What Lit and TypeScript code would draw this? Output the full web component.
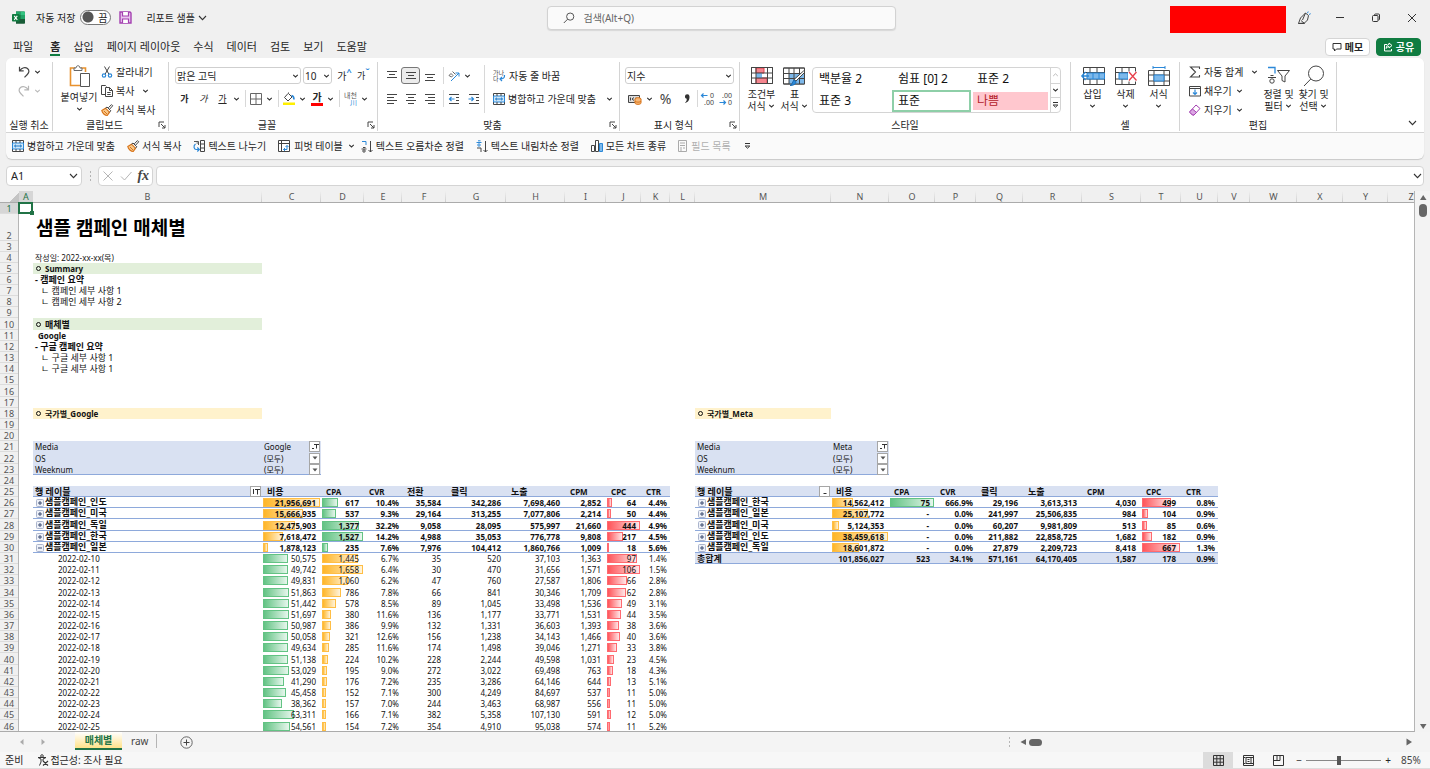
import { LitElement, html, svg, css, nothing, type TemplateResult, type SVGTemplateResult } from "lit";
import { customElement, state } from "lit/decorators.js";
import { classMap } from "lit/directives/class-map.js";

/* ---------- icons ---------- */

const icon = (w: number, h: number, body: SVGTemplateResult) =>
  html`<svg class="ic" width=${w} height=${h} viewBox="0 0 ${w} ${h}" fill="none" stroke="#444" stroke-width="1" aria-hidden="true">${body}</svg>`;

const chev = (color = "#333") => icon(9, 6, svg`<path d="M2.2 1.8 4.5 4 6.8 1.8" stroke=${color} stroke-width="1.1"/>`);
const chevBig = () => icon(9, 6, svg`<path d="M1 1 4.5 4.6 8 1" stroke="#333" stroke-width="1.1"/>`);

const lines = (rows: [number, number, number][]) =>
  icon(12, 12, svg`${rows.map(([x, y, w]) => svg`<path d="M${x} ${y}.5h${w}"/>`)}`);

const I = {
  logo: () => icon(13, 13, svg`<g stroke="none"><path d="M4 .5h8a1 1 0 0 1 1 1V12a.8.8 0 0 1-.8.8H4z" fill="#185c37"/><path d="M4 .5h4.5v3.5H4z" fill="#21a366"/><path d="M8.5.5H12a1 1 0 0 1 1 1V4H8.5z" fill="#33c481"/><path d="M4 4h4.5v4H4z" fill="#107c41"/><path d="M8.5 4H13v4H8.5z" fill="#21a366"/><rect y="3" width="7.5" height="7.5" rx=".8" fill="#107c41"/></g><path d="M2.2 4.8 5.3 8.8M5.3 4.8 2.2 8.8" stroke="#fff" stroke-width="1.1"/>`),
  save: () => icon(13, 13, svg`<path d="M1 1h10l1 1v10H1z" stroke="#a33fb0" stroke-width="1.4" fill="#e9c5ef"/><path d="M3.5 1v4h6V1M3.5 12V8h6v4" stroke="#a33fb0" stroke-width="1.2" fill="#fff"/>`),
  search: () => icon(12, 12, svg`<circle cx="7.2" cy="4.6" r="3.6" stroke="#555"/><path d="M4.6 7.2.8 11" stroke="#555"/>`),
  pen: () => icon(14, 14, svg`<path d="M1.5 12.5 3.5 7 8.5 2l3 2.5-1 4.5-3 3zM1.5 12.5h6M4 9.5l3.5 3M8.5 2 5.5 9"/><path d="M10.5 2.2 11.2.5M12 3.5l1.7-.8" stroke="#2b88d8"/>`),
  min: () => icon(10, 10, svg`<path d="M1 4.500h8" stroke="#333"/>`),
  restore: () => icon(10, 10, svg`<rect x="1.5" y="2.5" width="5.5" height="6" rx="1" stroke="#333"/><path d="M3.5 2.5V2a1 1 0 0 1 1-1h3a1 1 0 0 1 1 1v4a1 1 0 0 1-1 1" stroke="#333"/>`),
  close: () => icon(10, 10, svg`<path d="M1 1l8 8M9 1 1 9" stroke="#333"/>`),
  memo: () => icon(10, 10, svg`<path d="M1 1.5h8v5.5H4.5L2.5 9V7H1z" stroke="#333"/>`),
  share: () => icon(10, 10, svg`<path d="M4 2.5H1.5v6.500h7V7M6 1l3 2.5-3 2.5V4.5C4.5 4.5 3.5 5.5 3.2 6.5 3.2 4 4.5 2.5 6 2.5z" stroke="#fff"/>`),
  undo: () => icon(12, 12, svg`<path d="M1.5.8v4h4.2M1.8 4.5C4 1.5 7.5.8 9.5 2.5s1.8 4-.2 6L6.5 11.3" stroke="#444" stroke-width="1.2"/>`),
  redo: () => icon(12, 12, svg`<path d="M10.5.8v4H6.3M10.2 4.5C8 1.5 4.5.8 2.5 2.5s-1.800 4 .2 6l2.8 2.8" stroke="#b5b5b5" stroke-width="1.2"/>`),
  paste: () => icon(22, 22, svg`<path d="M6 3H1.5v17.5H11M12 3h4.5v4" stroke="#e8912d" stroke-width="1.6"/><path d="M5 5.5V3h2c0-3 4-3 4 0h2v2.5z" fill="#fff" stroke="#666"/><path d="M11.5 8.5h9v13h-9z" fill="#fff" stroke="#555"/>`),
  cut: () => icon(12, 12, svg`<path d="M3.5.5 7.8 8M8.5.5 4.2 8"/><circle cx="3" cy="9.5" r="1.7" stroke="#2b88d8" stroke-width="1.2"/><circle cx="9" cy="9.5" r="1.7" stroke="#2b88d8" stroke-width="1.2"/>`),
  copy: () => icon(12, 12, svg`<path d="M4 9.5H.5v-9h4l1 1"/><path d="M4.5 2.5h4l3 3v6h-7z" fill="#fff"/><path d="M8.5 2.5v3h3M6.2 7.5h3.5M6.2 9.5h3.5"/>`),
  brush: () => icon(12, 12, svg`<path d="M.8 6.500 4.500 4.200l4 4L6.200 11.500C4 11.500 1.200 9 .8 6.500z" fill="#f9c98a" stroke="#d8741a" stroke-width="1.2"/><path d="M4.500 4.200 6 3l3.800 3.800-1.300 1.400M7.300 3.800 10.500.6l1.200 1.200-3 3.300" stroke="#444"/><path d="M3 7l3 3" stroke="#d8741a"/>`),
  border: () => icon(12, 12, svg`<path d="M.5.5h11v11H.5zM6 .5v11M.5 6h11" stroke="#666"/>`),
  fill: () => icon(12, 14, svg`<path d="M5 1.5 1.5 5.5 5 9 9 5 5.5 1.5V.5"/><path d="M8.5 3.5c2 .5 2.5 2 2.5 4" stroke="#2b88d8" stroke-width="1.6"/><path d="M0 10.5h12v2.5H0z" fill="#ffef00" stroke="none"/>`),
  top: () => lines([[1, 1, 10], [3, 4, 6], [1, 7, 10]]),
  mid: () => lines([[1, 2, 10], [3, 5, 6], [1, 8, 10]]),
  bot: () => lines([[1, 4, 10], [3, 7, 6], [1, 10, 10]]),
  left: () => lines([[1, 1, 10], [1, 4, 7], [1, 7, 10], [1, 10, 7]]),
  center: () => lines([[1, 1, 10], [3, 4, 6], [1, 7, 10], [3, 10, 6]]),
  right: () => lines([[1, 1, 10], [4, 4, 7], [1, 7, 10], [4, 10, 7]]),
  orient: () => icon(12, 12, svg`<path d="M3 11 11 3M7.5 3H11v3.5" stroke="#2b88d8"/><path d="M1 5.5l2-2 2 2-1.5 1.5zM4.500 1.5l3 3" stroke="#666"/>`),
  outdent: () => icon(12, 12, svg`<path d="M1 1.5h10M8 4.5h3M8 7.5h3M1 10.5h10"/><path d="M6.5 6h-5M3.5 4 1.500 6l2 2" stroke="#2b88d8" stroke-width="1.2"/>`),
  indent: () => icon(12, 12, svg`<path d="M1 1.5h10M8 4.5h3M8 7.5h3M1 10.5h10"/><path d="M.5 6h5M3.5 4l2 2-2 2" stroke="#2b88d8" stroke-width="1.2"/>`),
  wrap: () => icon(13, 13, svg`<g stroke="none" fill="#444" font-size="6"><text x="0" y="5.5">가나</text><text x="0" y="12">다</text></g><path d="M11.5 6c.5 3-1.5 4-4.5 4M9 8 7 10l2 2" stroke="#2b88d8" stroke-width="1.2"/>`),
  merge: () => icon(12, 12, svg`<path d="M.5.5h11v11H.5z" fill="#fff"/><path d="M.5 3h11v6H.5z" fill="#cfe6f8" stroke="#2b88d8"/><path d="M4 .5V3M8 .5V3M4 9v2.5M8 9v2.5"/><path d="M2.5 6h7M4 4.7 2.5 6 4 7.3M8 4.700 9.5 6 8 7.3" stroke="#1f7bc9"/>`),
  money: () => icon(14, 12, svg`<path d="M.5 2.5h11v7H.5z" fill="#ddd"/><path d="M2.5 4.5v3M6 4.5 4 6l2 1.5M8 4.5v3"/><g stroke="#d8741a" fill="#f7b878"><ellipse cx="10" cy="6" rx="3" ry="1.3"/><path d="M7 6v4c0 1.800 6 1.8 6 0V6M7 8c0 1.5 6 1.5 6 0"/></g>`),
  comma: () => icon(8, 12, svg`<path d="M6.5 3.5a2.3 2.3 0 1 0-2.8 2.3C4 7.5 3.2 9 1.8 10 4.8 9.5 6.7 7 6.5 3.5z" fill="#333" stroke="none"/>`),
  decUp: () => icon(14, 14, svg`<path d="M6.5 3.5h-6M2.5 1.5l-2 2 2 2" stroke="#2b88d8" stroke-width="1.2"/><g stroke="none" fill="#444" font-size="7"><text x="9" y="6">0</text><text x="3" y="13">.00</text></g>`),
  decDown: () => icon(14, 14, svg`<path d="M.5 10.5h6M4.5 8.5l2 2-2 2" stroke="#2b88d8" stroke-width="1.2"/><g stroke="none" fill="#444" font-size="7"><text x="3" y="6">.00</text><text x="9" y="13">0</text></g>`),
  cond: () => icon(22, 17, svg`<path d="M.5.5h21v16H.5z" fill="#fff"/><path d="M5 1h8v5H5zM5 11h11v5.5H5z" fill="#f4868f" stroke="#e0404c"/><path d="M5 6h6v5H5z" fill="#7db8ea" stroke="none"/><path d="M.5.5h21v16H.5zM.5 6h21M.5 11h21M5 .5v16M16.5 .5v16"/>`),
  tableFmt: () => icon(23, 20, svg`<path d="M.5 2h21v16H.5z" fill="#fff"/><path d="M6 7.500h15.5v10.5H6z" fill="#7db8ea" stroke="none"/><path d="M.5 2h21v16H.5zM.5 7.500h21M.5 12.500h21M6 2v16M11 2v16M16.500 2v16"/><path d="M22 6 13 15l-2-1.500 9.500-8.500z" fill="#fff"/><path d="M7 19.500c2 0 2.5-4 4-5.500l2 1.500c0 3-3 4-6 4z" fill="#2b88d8" stroke="#1b6cb3"/>`),
  insert: () => icon(24, 18, svg`<path d="M2.5.5h21v17h-21zM2.5 5.5h21M2.5 12h21M9 .5v17M16 .5v17"/><path d="M6 6h17.500v6H6z" fill="#7db8ea" stroke="#2b88d8"/><path d="M8 9H1M4.500 5 .8 9l3.7 4" stroke="#2b88d8" stroke-width="1.3"/><path d="M12 6v6M18 6v6" stroke="#2b88d8"/>`),
  del: () => icon(22, 18, svg`<path d="M.5.5h20v17H.5zM.5 5.5h20M.5 12h20M7 .5v17M14 .5v17"/><path d="M4 6h9v6H4z" fill="#7db8ea" stroke="#2b88d8"/><path d="M13 4.5h9v10h-9z" fill="#fff" stroke="none"/><path d="M14 5l7.5 8.5M21.5 5 14 13.5" stroke="#e8404c" stroke-width="1.3"/>`),
  format: () => icon(22, 20, svg`<path d="M5 1.5h12M5 0v3M17 0v3" stroke="#2b88d8"/><path d="M.5 4.500h21v15H.5zM.5 9h21M.5 15h21M6 4.500v15M16 4.500v15"/><path d="M6 9h10v6H6z" fill="#7db8ea" stroke="#2b88d8"/>`),
  sum: () => icon(12, 12, svg`<path d="M10.5 3V1h-9L6.5 6l-5 5h9V9" stroke="#444" stroke-width="1.1"/>`),
  fillDown: () => icon(12, 12, svg`<path d="M.5 1.5h11v9.5H.5zM.5 3.5h11"/><path d="M6 4.5V9.5M4 7.5l2 2 2-2" stroke="#2b88d8" stroke-width="1.2"/>`),
  erase: () => icon(12, 12, svg`<path d="M1 7.5 7 1l4 3.5-6 6.500H3.5L1 8.5z" fill="#fff" stroke="#a33fb0"/><path d="M1 7.5 3.5 5l4 3.5-2.5 2.5H3.5L1 8.5z" fill="#dca6e4" stroke="#a33fb0"/>`),
  sortFilter: () => icon(24, 19, svg`<path d="M1 1.5h7v6" stroke="#2b88d8" stroke-width="1.3"/><path d="M10.5 4.5h12L18 10v6l-3-1.5V10z"/><path d="M3.5 9.5h3M1 11.5h8"/><circle cx="5" cy="15" r="2.2"/>`),
  find: () => icon(22, 22, svg`<circle cx="13" cy="8.5" r="7.5" stroke="#444"/><path d="M7.800 14 1 21"/>`),
  split: () => icon(12, 12, svg`<path d="M7.5.5h4v11h-4zM7.5 4h4M7.5 8h4"/><path d="M1 1.500h4.500V5M5.500 3h-2" stroke="#555"/><path d="M2.500 4C0 6 1 9 3 9.500h3M4.300 7.500l2 2-2 2" stroke="#2b88d8" stroke-width="1.2"/>`),
  pivot: () => icon(12, 12, svg`<path d="M.5.5h11v11H.5zM.5 3.5h11M3.5.5v11" fill="#fff"/><path d="M5.5 9.5h3.5V5.5M7.500 7 9 5.5 10.5 7M7 8 5.5 9.5 7 11" stroke="#2b88d8"/>`),
  asc: () => icon(12, 13, svg`<path d="M1 1.5h4V5" stroke="#2b88d8"/><path d="M2 7.5h2.5M.5 9h5"/><circle cx="3" cy="11" r="1.2"/><path d="M9.5 1v11M7.5 10l2 2 2-2"/>`),
  desc: () => icon(12, 13, svg`<path d="M1 8h4v4" stroke="#444"/><path d="M2 .8h2.5M.5 2.500h5" stroke="#2b88d8"/><circle cx="3" cy="5" r="1.2" stroke="#2b88d8"/><path d="M9.5 1v11M7.5 10l2 2 2-2"/>`),
  chart: () => icon(12, 12, svg`<path d="M.5 5.5h3v6h-3z" fill="#fff"/><path d="M4.5 .5h3v11h-3z" fill="#fff"/><path d="M8.5 3.5h3v8h-3z" fill="#7db8ea" stroke="#2b88d8"/>`),
  fields: () => icon(10, 12, svg`<path d="M.5.5h8v11h-8zM2 3h5M2 5.5h5M2 8h2M5 8h2M2 10h2" stroke="#aaa"/>`),
  overflow: () => icon(9, 8, svg`<path d="M2 1.5h5M2.2 4 4.5 6.2 6.8 4z" stroke="#333"/>`),
  launcher: () => icon(8, 8, svg`<path d="M1 6V1h5M3 3l4 4M7 4v3H4" stroke="#444"/>`),
  x: () => icon(12, 12, svg`<path d="M1.5 1.5l9 9M10.5 1.5l-9 9" stroke="#b5b5b5"/>`),
  check: () => icon(12, 12, svg`<path d="M1 6.5l3.5 3.5L11.5 2" stroke="#b5b5b5"/>`),
  dots: () => icon(3, 12, svg`<path d="M1.5 1.5v1M1.5 5.5v1M1.5 9.5v1" stroke="#777"/>`),
  tri: (d: string, c = "#666") => icon(8, 8, svg`<path d=${d} fill=${c} stroke="none"/>`),
  add: () => icon(13, 13, svg`<circle cx="6.5" cy="6.5" r="5.7" stroke="#666"/><path d="M6.5 3.5v6M3.5 6.5h6" stroke="#444"/>`),
  access: () => icon(12, 12, svg`<circle cx="5" cy="2" r="1.3"/><path d="M1 3.5l3 1.5v3l-1.500 3.5M9 3.5 6 5v2M1 3.5 9 3.5" stroke="#333"/><path d="M6 7l5 4.5M11 7l-5 4.5" stroke="#333" stroke-width="1.2"/>`),
  normal: () => icon(11, 11, svg`<path d="M.5.5h10v10H.5zM.5 3.8h10M.5 7.2h10M3.8.5v10M7.2.5v10" stroke="#333"/>`),
  pageLayout: () => icon(11, 11, svg`<path d="M.5.5h10v10H.5zM3 2.5h5v6H3zM4.5 4.500h2M4.5 6.500h2M.5 2.5h2M.5 8.5h2M8 2.5h2.5M8 8.5h2.5" stroke="#333"/>`),
  pageBreak: () => icon(11, 11, svg`<path d="M.5.5h10v10H.5zM.5 5.5h6.5V.5M4 .5v5" stroke="#333"/>`),
  plusBox: () => icon(8, 8, svg`<rect x=".5" y=".5" width="7" height="7" rx="1" fill="#eef1f8" stroke="#aab4cc"/><path d="M2 4h4M4 2v4" stroke="#3a4a70"/>`),
  minusBox: () => icon(8, 8, svg`<rect x=".5" y=".5" width="7" height="7" rx="1" fill="#eef1f8" stroke="#aab4cc"/><path d="M2 4h4" stroke="#3a4a70"/>`),
  down: () => icon(8, 8, svg`<path d="M1.500 2.500h5L4 5.500z" fill="#555" stroke="none"/>`),
  funnel: () => icon(8, 8, svg`<path d="M3 1.5h5M5.5 1.5v4M1 5.5h2" stroke="#333"/>`),
  sortFunnel: () => icon(8, 8, svg`<path d="M1.5 1v5M3 1.5h5M5.5 1.5v5" stroke="#333"/>`),
  dash: () => icon(8, 8, svg`<path d="M2.5 5.5h3" stroke="#333"/>`),
};

/* ---------- sheet data ---------- */

const COLS = "ABCDEFGHIJKLMNOPQRSTUVWXYZ".split("");
const COL_W = [14, 229, 59, 43, 38, 44, 60, 59, 41, 35, 29, 25, 136, 58, 46, 41, 47, 59, 59, 40, 37, 32, 47, 46, 45, 46];
const LAST_ROW = 46;

const HEAD_GOOGLE = ["비용", "CPA", "CVR", "전환", "클릭", "노출", "CPM", "CPC", "CTR"];
const HEAD_META = ["비용", "CPA", "CVR", "클릭", "노출", "CPM", "CPC", "CTR"];

const GROUPS = [
  ["인도", "21,956,691 617 10.4% 35,584 342,286 7,698,460 2,852 64 4.4%"],
  ["미국", "15,666,935 537 9.3% 29,164 313,255 7,077,806 2,214 50 4.4%"],
  ["독일", "12,475,903 1,377 32.2% 9,058 28,095 575,997 21,660 444 4.9%"],
  ["한국", "7,618,472 1,527 14.2% 4,988 35,053 776,778 9,808 217 4.5%"],
  ["일본", "1,878,123 235 7.6% 7,976 104,412 1,860,766 1,009 18 5.6%"],
];

const DAYS = [
  "50,575 1,445 6.7% 35 520 37,103 1,363 97 1.4%",
  "49,742 1,658 6.4% 30 470 31,656 1,571 106 1.5%",
  "49,831 1,060 6.2% 47 760 27,587 1,806 66 2.8%",
  "51,863 786 7.8% 66 841 30,346 1,709 62 2.8%",
  "51,442 578 8.5% 89 1,045 33,498 1,536 49 3.1%",
  "51,697 380 11.6% 136 1,177 33,771 1,531 44 3.5%",
  "50,987 386 9.9% 132 1,331 36,603 1,393 38 3.6%",
  "50,058 321 12.6% 156 1,238 34,143 1,466 40 3.6%",
  "49,634 285 11.6% 174 1,498 39,046 1,271 33 3.8%",
  "51,138 224 10.2% 228 2,244 49,598 1,031 23 4.5%",
  "53,029 195 9.0% 272 3,022 69,498 763 18 4.3%",
  "41,290 176 7.2% 235 3,286 64,146 644 13 5.1%",
  "45,458 152 7.1% 300 4,249 84,697 537 11 5.0%",
  "38,362 157 7.0% 244 3,463 68,987 556 11 5.0%",
  "63,311 166 7.1% 382 5,358 107,130 591 12 5.0%",
  "54,561 154 7.2% 354 4,910 95,038 574 11 5.2%",
];

const META = [
  ["한국", "14,562,412 75 666.9% 29,196 3,613,313 4,030 499 0.8%"],
  ["일본", "25,107,772 - 0.0% 241,997 25,506,835 984 104 0.9%"],
  ["미국", "5,124,353 - 0.0% 60,207 9,981,809 513 85 0.6%"],
  ["인도", "38,459,618 - 0.0% 211,882 22,858,725 1,682 182 0.9%"],
  ["독일", "18,601,872 - 0.0% 27,879 2,209,723 8,418 667 1.3%"],
];
const META_TOTAL = "101,856,027 523 34.1% 571,161 64,170,405 1,587 178 0.9%";

type Cell = { cls: string; body: unknown };
type Bar = { color: string; max: number };

function buildSheet(): Map<string, Cell> {
  const cells = new Map<string, Cell>();
  const put = (ref: string, cls: string, body: unknown = nothing) => cells.set(ref, { cls, body });
  const index = (c: string) => COLS.indexOf(c);

  const numbers = (row: number, start: string, values: string, cls: string, bars: Record<string, Bar>) =>
    values.split(" ").forEach((v, i) => {
      const col = COLS[index(start) + i];
      const bar = bars[col];
      const n = Number(v.replace(/,/g, ""));
      const kind = v.endsWith("%") ? "num pct" : v === "-" ? "num none" : "num";
      put(col + row, `${cls} ${kind}`, bar && !Number.isNaN(n)
        ? html`<div class="stack"><span class="bar ${bar.color}" style="width:${Math.round((n / bar.max) * 100)}%"></span><span class="val">${v}</span></div>`
        : v);
    });

  put("B2", "title", "샘플 캠페인 매체별");
  put("B4", "in2", "작성일: 2022-xx-xx(목)");
  put("B5", "b green in3", html`<i class="bullet"></i>Summary`);
  put("B6", "ko b in2", "- 캠페인 요약");
  put("B7", "ko in8", "ㄴ 캠페인 세부 사항 1");
  put("B8", "ko in8", "ㄴ 캠페인 세부 사항 2");
  put("B10", "ko b green in3", html`<i class="bullet"></i>매체별`);
  put("B11", "b in5", "Google");
  put("B12", "ko b in2", "- 구글 캠페인 요약");
  put("B13", "ko in8", "ㄴ 구글 세부 사항 1");
  put("B14", "ko in8", "ㄴ 구글 세부 사항 1");
  put("B18", "b yellow in3", html`<i class="bullet"></i>국가별_Google`);
  put("M18", "b yellow in3", html`<i class="bullet"></i>국가별_Meta`);

  const filter = (row: number, label: string, values: string[], last: boolean) => {
    [["B", "C"], ["M", "N"]].forEach(([l, v], i) => {
      const line = last ? " line" : "";
      put(l + row, "blue in2" + line, label);
      put(v + row, "blue" + line, html`<div class="pick"><span>${values[i]}</span><button class="fbtn" aria-label="${label} 필터">${row === 21 ? I.funnel() : I.down()}</button></div>`);
    });
  };
  filter(21, "Media", ["Google", "Meta"], false);
  filter(22, "OS", ["(모두)", "(모두)"], false);
  filter(23, "Weeknum", ["(모두)", "(모두)"], true);

  const heading = (col: string, ic: TemplateResult, names: string[]) => {
    put(col + 25, "ko b blue line", html`<div class="pick"><span>행 레이블</span><button class="fbtn" aria-label="행 레이블 필터">${ic}</button></div>`);
    names.forEach((n, i) => put(COLS[index(col) + 1 + i] + 25, `b blue line in5 ${/[A-Z]/.test(n) ? "" : "ko"}`, n));
  };
  heading("B", I.sortFunnel(), HEAD_GOOGLE);
  heading("M", I.dash(), HEAD_META);

  const label = (name: string, open: boolean) =>
    html`<div class="node"><button aria-label=${open ? "접기" : "펼치기"}>${open ? I.minusBox() : I.plusBox()}</button><span>샘플캠페인_${name}</span></div>`;

  GROUPS.forEach(([name, values], i) => {
    put("B" + (26 + i), "ko b line", label(name, i === 4));
    numbers(26 + i, "C", values, "b line", {
      C: { color: "orange", max: 21956691 }, D: { color: "lime", max: 1527 }, J: { color: "red", max: 444 },
    });
  });
  DAYS.forEach((values, i) => {
    put("B" + (31 + i), "day", `2022-02-${10 + i}`);
    numbers(31 + i, "C", values, "", {
      C: { color: "lime", max: 115000 }, D: { color: "orange", max: 1658 }, J: { color: "red", max: 106 },
    });
  });
  META.forEach(([name, values], i) => {
    put("M" + (26 + i), "ko b line", label(name, false));
    numbers(26 + i, "N", values, "b line", {
      N: { color: "orange", max: 38459618 }, O: { color: "lime", max: 75 }, T: { color: "red", max: 667 },
    });
  });
  put("M31", "ko b blue in2 line", "총합계");
  numbers(31, "N", META_TOTAL, "b blue line", {});
  return cells;
}

const SHEET = buildSheet();

@customElement("app-root")
export class AppRoot extends LitElement {
  @state() private tab = "홈";

  static styles = css`
    :host { display: block; height: 100vh; overflow: hidden; font: 10px/12px "Noto Sans", "Noto Sans CJK KR", sans-serif; color: #262626; }
    * { box-sizing: border-box; }
    button, input, select { font: inherit; color: inherit; border: 0; background: none; padding: 0; margin: 0; outline: 0; appearance: none; border-radius: 0; }
    button { display: inline-flex; align-items: center; justify-content: center; white-space: nowrap; }
    .ic { display: block; flex: none; overflow: visible; }
    .app { height: 100%; display: flex; flex-direction: column; background: #f0f0f0; }
    .row { display: flex; align-items: center; }

    .titlebar { display: grid; grid-template-columns: 1fr 349px 1fr; align-items: center; height: 35px; flex: none; padding-left: 12px; }
    .auto { display: flex; align-items: center; gap: 5px; margin: 0 8px 0 11px; }
    .switch { display: grid; width: 31px; height: 15px; align-items: center; }
    .switch > * { grid-area: 1 / 1; }
    .switch input { width: 31px; height: 15px; border: 1px solid #777; border-radius: 8px; background: radial-gradient(circle at 7px 6px, #555 5px, transparent 6px) #fff; }
    .switch span { justify-self: end; padding-right: 4px; pointer-events: none; }
    .doc { margin-left: 14px; gap: 3px; }
    .search { display: flex; align-items: center; gap: 9px; height: 24px; padding-left: 15px; background: #fafafa; border: 1px solid #d2d2d2; border-radius: 4px; box-shadow: 0 1px 1px #d8d8d8; }
    .search input { flex: 1; height: 22px; }
    .search input::placeholder { color: #666; opacity: 1; }
    .win { display: flex; justify-content: flex-end; align-items: center; height: 35px; }
    .account { width: 116px; height: 27px; background: #f00; margin-top: 4px; }
    .win button { width: 36px; height: 30px; }

    .tabs { display: flex; align-items: center; height: 23px; flex: none; padding: 0 9px 0 13px; }
    .tabs nav { display: flex; gap: 13px; flex: 1; font-size: 11px; }
    .tabs nav button { height: 19px; border: solid transparent; border-width: 2px 0; }
    .tabs nav button:first-child { margin-right: 4px; }
    .tabs nav button.on { border-bottom-color: #107c41; font-weight: 700; }
    .pill { height: 18px; width: 45px; gap: 3px; border: 1px solid #d5d5d5; border-radius: 4px; background: #fff; font-weight: 700; margin-left: 6px; }
    .pill.go { background: #107c41; border-color: #107c41; color: #fff; }

    .card { flex: none; margin: 0 6px; background: #fafafa; border-radius: 6px; overflow: hidden; box-shadow: 0 1px 1px #c8c8c8; }
    .ribbon { display: flex; height: 75px; background: #fff; border-bottom: 1px solid #d4d4d4; }
    .group { display: flex; flex-direction: column; margin: 4px 0 1px; border-right: 1px solid #d4d4d4; flex: none; }
    .group > .body { display: flex; height: 57px; flex: none; }
    .cap { display: flex; height: 12px; align-items: center; }
    .cap span { flex: 1; text-align: center; white-space: nowrap; }
    .cap button { width: 12px; }
    .g1 { width: 47px; } .g2 { width: 116px; } .g3 { width: 209px; } .g4 { width: 242px; }
    .g5 { width: 120px; } .g6 { width: 331px; } .g7 { width: 109px; } .g8 { width: 157px; }
    .g1 .three { padding-left: 12px; }
    .g2 .body, .g4 .body { padding-left: 4px; }
    .g3 .body { padding-left: 6px; }
    .g5 .body, .g6 .body, .g7 .body { padding-left: 5px; }
    .g8 .three { width: 82px; padding-left: 9px; }
    .g8 .bigs { gap: 2px; }
    .g4 .pos { width: 102px; }
    .g4 .txtcol { padding-left: 8px; }
    .g5 .signs { padding-left: 3px; }
    .fold { margin-left: auto; align-self: flex-end; padding: 6px 7px; }
    .three { display: flex; flex-direction: column; align-items: flex-start; }
    .three button { height: 19px; gap: 3px; }
    .three .far { margin-left: 4px; }
    .two { display: flex; flex-direction: column; gap: 6px; padding-top: 5px; }
    .two .row { height: 17px; }
    .sep { width: 1px; height: 17px; background: #d8d8d8; margin: 0 4px; flex: none; }
    .tall { width: 1px; height: 48px; background: #d8d8d8; margin-top: 3px; }
    .split { gap: 3px; height: 17px; }
    .after { margin-left: 4px; }
    .ltr { width: 19px; height: 17px; }
    .ltr.boxed { border: 1px solid #777; border-radius: 3px; background: #ececec; }
    .small { font-size: 9px; }
    .percent { font-size: 14px; margin: 0 2px; color: #444; }
    .signs .sep { margin: 0 3px 0 1px; }
    .bold { font-weight: 700; } .ital { font-style: italic; } .und { text-decoration: underline; }
    .sup { color: #2b88d8; align-self: flex-start; font-size: 9px; line-height: 10px; font-weight: 700; }
    .fcolor { border-bottom: 3px solid #f00; width: 12px; line-height: 11px; font-weight: 700; }
    .ruby { width: 13px; font-size: 7px; line-height: 7px; text-align: left; color: #555; }
    .ruby b { display: block; color: #2b88d8; text-align: right; font-weight: 400; }
    .drop { display: grid; align-items: center; height: 17px; border: 1px solid #cfcfcf; border-radius: 3px; background: #fff; }
    .drop > * { grid-area: 1 / 1; }
    .drop select { width: 100%; padding-left: 1px; height: 15px; line-height: 14px; }
    .drop .ic { justify-self: end; pointer-events: none; }
    .font { width: 126px; margin-right: 2px; } .size { width: 29px; margin-right: 3px; } .fmt { width: 109px; }
    .big { display: flex; flex-direction: column; justify-content: flex-start; gap: 4px; width: 33px; }
    .big .pic { height: 17px; display: flex; align-items: center; }
    .big .txt { display: flex; flex-direction: column; align-items: center; }
    .big .txt span { display: flex; align-items: center; height: 12px; gap: 1px; }
    .bigs { display: flex; align-items: flex-start; padding-top: 5px; }
    .paste { width: 44px; }
    .paste .clip { padding: 3px 0 0 2px; }
    .gallery { display: grid; grid-template-columns: 79px 79px 79px 1fr; grid-template-rows: 1fr 1fr; width: 249px; height: 46px; margin: 5px 0 0 1px; border: 1px solid #d4d4d4; border-radius: 4px; font-size: 12px; }
    .gallery > button { justify-content: flex-start; color: #111; border: 2px solid transparent; padding-left: 4px; background-clip: padding-box; }
    .gallery > .cur { border-color: #8ecfa8; background-color: #fff; }
    .gallery > .bad { background-color: #ffc7ce; color: #b3202a; }
    .gscroll { grid-area: 1 / 4 / 3 / 5; display: grid; grid-template-rows: 1fr 1fr 1fr; border-left: 1px solid #d4d4d4; }
    .gscroll button + button { border-top: 1px solid #d4d4d4; }
    .gscroll svg { margin-left: -1px; }
    .qat { display: flex; align-items: center; height: 26px; gap: 12px; padding-left: 6px; }
    .qat button { gap: 3px; }
    .qat .off { color: #b0b0b0; }
    .qat .wide { margin-right: -7px; gap: 4px; }

    .fbar { display: flex; flex: none; height: 20px; margin: 7px 6px 5px; }
    .box { background: #fff; border: 1px solid #d4d4d4; border-radius: 4px; display: flex; align-items: center; }
    .name { width: 76px; padding: 0 3px 0 4px; font-size: 11px; }
    .name input { flex: 1; width: 40px; }
    .grip { width: 16px; display: grid; place-items: center; }
    .fx { width: 55px; justify-content: space-around; margin-right: 3px; }
    .fx em { font: italic 700 14px/14px "Liberation Serif", serif; color: #444; }
    .formula { flex: 1; padding-right: 1px; }
    .formula input { flex: 1; }

    .main { flex: 1; min-height: 0; display: flex; background: #f3f3f3; }
    .view { flex: 1; min-width: 0; overflow: hidden; background: #fff; border-right: 1px solid #b5b5b5; border-bottom: 1px solid #ababab; }
    .vscroll { width: 15px; display: flex; flex-direction: column; align-items: center; padding: 2px 0 1px; gap: 3px; }
    .vscroll .thumb { width: 8px; height: 13px; border-radius: 4px; background: #666; }
    .vscroll .end { margin-top: auto; }
    table { border-collapse: separate; border-spacing: 0; table-layout: fixed; width: 1434px; font-size: 8px; line-height: 11px; color: #111; }
    td, th { padding: 0; height: 11px; white-space: nowrap; font-weight: 400; text-align: left; vertical-align: middle; }
    thead th { height: 12px; text-align: center; font-size: 9px; line-height: 11px; color: #555; background: linear-gradient(#f0f0f0, #cfcfcf) right / 1px 100% no-repeat #f0f0f0; border-bottom: 1px solid #ababab; }
    tbody th { text-align: center; font-size: 9px; color: #555; background: #f0f0f0; border-right: 1px solid #b5b5b5; box-shadow: inset 0 -1px #dcdcdc; vertical-align: bottom; }
    thead th.on, tbody th.on { background: #d6d6d6; color: #217346; }
    thead th.corner { background: linear-gradient(135deg, transparent 70%, #c4c4c4 70%) #f0f0f0; }
    .r12 > * { height: 12px; }
    .r27 > * { height: 27px; }
    .ko { font-size: 9px; }
    .b { font-weight: 700; }
    .title { font-size: 19px; line-height: 26px; font-weight: 700; padding-left: 3px; color: #000; }
    .in2 { padding-left: 2px; } .in3 { padding-left: 3px; } .in5 { padding-left: 5px; } .in8 { padding-left: 8px; }
    .day { padding-left: 25px; }
    .green { background: #e2efda; } .yellow { background: #fff2cc; } .blue { background: #d9e1f2; }
    .line { box-shadow: inset 0 -1px #8ea9db; }
    .bullet { display: inline-block; width: 5px; height: 5px; border: 1px solid #111; border-radius: 3px; margin-right: 4px; vertical-align: 1px; }
    .num { text-align: right; padding-right: 5px; }
    .pct { padding-right: 3px; }
    .none { padding-right: 6px; }
    .num:has(.stack) { padding: 0; }
    .stack { display: grid; align-items: center; margin: 0 1px; }
    .stack > * { grid-area: 1 / 1; }
    .val { padding-right: 4px; }
    .bar { height: 9px; min-width: 1px; border: 1px solid; }
    .orange { border-color: #ffbe45; background: linear-gradient(90deg, #ffb628, #fff3da); }
    .lime { border-color: #63c384; background: linear-gradient(90deg, #63c384, #e6f6ec); }
    .red { border-color: #ff6a70; background: linear-gradient(90deg, #ff555a, #ffe6e7); }
    .pick { display: flex; justify-content: space-between; align-items: center; height: 11px; padding-left: 2px; }
    .fbtn { width: 11px; height: 11px; background: #fff; border: 1px solid #a6a6a6; margin-right: 1px; }
    .node { display: flex; align-items: center; gap: 1px; padding-left: 3px; height: 11px; }
    .node span { line-height: 9px; padding-bottom: 2px; }
    .sel { position: relative; }
    .sel div { position: absolute; inset: -1px 0 0 -1px; border: 2px solid #217346; }
    .sel div::after { content: ""; position: absolute; right: -3px; bottom: -3px; width: 4px; height: 4px; background: #217346; }

    .sheets { flex: none; height: 20px; display: flex; background: #f4f4f4; }
    .arrows { width: 75px; display: flex; align-items: center; gap: 13px; padding-left: 18px; }
    .sheet { width: 47px; height: 18px; color: #217346; font-weight: 700; background: linear-gradient(#fff, #ffe28a); border-bottom: 2px solid #217346; }
    .raw { padding: 0 8px 0 9px; color: #444; height: 18px; }
    .sheets .rule { width: 1px; height: 14px; margin-top: 2px; background: #b5b5b5; }
    .plus { margin-left: 23px; }
    .hscroll { margin-left: auto; width: 30%; display: flex; align-items: center; padding-right: 17px; gap: 2px; }
    .hscroll .thumb { width: 13px; height: 7px; border-radius: 4px; background: #666; }
    .hscroll .end { margin-left: auto; }
    .status { flex: none; height: 17px; display: flex; align-items: center; padding: 0 10px 0 5px; background: #f7f7f7; border-bottom: 1px solid #ddd; white-space: nowrap; }
    .status .acc { margin-left: 14px; gap: 1px; }
    .views { margin-left: auto; display: flex; margin-right: 1px; }
    .views button { width: 30px; height: 16px; }
    .views .on { background: #dcdcdc; }
    .zoom { display: flex; align-items: center; gap: 2px; }
    .zoom button { width: 10px; }
    .zoom input { width: 75px; height: 12px; background: linear-gradient(#888, #888) center / 100% 1px no-repeat; }
    .zoom input::-webkit-slider-thumb { appearance: none; width: 4px; height: 9px; background: #555; }
    .zoom output { margin-left: 6px; color: #444; width: 19px; }
  `;

  private group(cls: string, caption: string, body: TemplateResult, launcher = false) {
    return html`<section class="group ${cls}" aria-label=${caption}>
      <div class="body">${body}</div>
      <div class="cap"><span>${caption}</span>${launcher ? html`<button aria-label="${caption} 설정">${I.launcher()}</button>` : nothing}</div>
    </section>`;
  }

  private big(pic: TemplateResult, first: string, second?: string) {
    return html`<button class="big"><span class="pic">${pic}</span>
      <span class="txt"><span>${first}</span><span>${second ?? nothing}${chev()}</span></span></button>`;
  }

  private ribbon() {
    return html`<div class="ribbon">
      ${this.group("g1", "실행 취소", html`<div class="three">
        <button aria-label="실행 취소">${I.undo()}${chev()}</button>
        <button aria-label="다시 실행">${I.redo()}${chev("#bbb")}</button>
      </div>`)}
      ${this.group("g2", "클립보드", html`
        <button class="big paste">
          <span class="clip">${I.paste()}</span>
          <span class="txt"><span>붙여넣기</span><span>${chev()}</span></span>
        </button>
        <div class="three">
          <button>${I.cut()}잘라내기</button>
          <button>${I.copy()}복사 <span class="far">${chev()}</span></button>
          <button>${I.brush()}서식 복사</button>
        </div>`, true)}
      ${this.group("g3", "글꼴", html`<div class="two">
        <div class="row">
          <label class="drop font"><select aria-label="글꼴"><option>맑은 고딕</option></select>${chev()}</label>
          <label class="drop size"><select aria-label="글꼴 크기"><option>10</option></select>${chev()}</label>
          <button class="ltr" aria-label="글꼴 크기 크게">가<span class="sup">^</span></button>
          <button class="ltr" aria-label="글꼴 크기 작게"><span class="small">가</span><span class="sup">ˇ</span></button>
        </div>
        <div class="row">
          <button class="ltr small bold">가</button><button class="ltr small ital">가</button><button class="ltr small und">가</button>
          <button aria-label="밑줄 종류">${chev()}</button><span class="sep"></span>
          <button class="split" aria-label="테두리">${I.border()}${chev()}</button><span class="sep"></span>
          <button class="split" aria-label="채우기 색">${I.fill()}${chev()}</button>
          <button class="split after" aria-label="글꼴 색"><span class="fcolor">가</span>${chev()}</button><span class="sep"></span>
          <button class="split" aria-label="윗주"><span class="ruby">내천<b>川</b></span>${chev()}</button>
        </div></div>`, true)}
      ${this.group("g4", "맞춤", html`<div class="two pos">
        <div class="row">
          <button class="ltr" aria-label="위쪽 맞춤">${I.top()}</button><button class="ltr boxed" aria-label="가운데 맞춤">${I.mid()}</button><button class="ltr" aria-label="아래쪽 맞춤">${I.bot()}</button>
          <span class="sep"></span><button class="split" aria-label="방향">${I.orient()}${chev()}</button>
        </div>
        <div class="row">
          <button class="ltr" aria-label="왼쪽 맞춤">${I.left()}</button><button class="ltr" aria-label="가로 가운데 맞춤">${I.center()}</button><button class="ltr" aria-label="오른쪽 맞춤">${I.right()}</button>
          <span class="sep"></span><button aria-label="내어쓰기">${I.outdent()}</button><button class="ltr after" aria-label="들여쓰기">${I.indent()}</button>
        </div></div>
        <span class="tall"></span>
        <div class="two txtcol">
          <div class="row"><button class="split">${I.wrap()}자동 줄 바꿈</button></div>
          <div class="row"><button class="split">${I.merge()}<span>병합하고 가운데 맞춤</span>&nbsp;${chev()}</button></div>
        </div>`, true)}
      ${this.group("g5", "표시 형식", html`<div class="two">
        <div class="row"><label class="drop fmt"><select aria-label="표시 형식"><option>지수</option></select>${chev()}</label></div>
        <div class="row signs">
          <button class="split" aria-label="회계 표시 형식">${I.money()}${chev()}</button>
          <button class="ltr percent">%</button><button class="ltr" aria-label="쉼표 스타일">${I.comma()}</button>
          <span class="sep"></span><button aria-label="자릿수 늘림">${I.decUp()}</button><button class="after" aria-label="자릿수 줄임">${I.decDown()}</button>
        </div></div>`, true)}
      ${this.group("g6", "스타일", html`<div class="bigs">
        ${this.big(I.cond(), "조건부", "서식")}${this.big(I.tableFmt(), "표", "서식")}</div>
        <div class="gallery">
          <button>백분율 2</button><button>쉼표 [0] 2</button><button>표준 2</button>
          <button>표준 3</button><button class="cur">표준</button><button class="bad">나쁨</button>
          <div class="gscroll">
            <button aria-label="위로">${icon(9, 6, svg`<path d="M2.200 4 4.500 1.800 6.800 4" stroke="#bbb"/>`)}</button>
            <button aria-label="아래로">${chev()}</button><button aria-label="자세히">${I.overflow()}</button>
          </div>
        </div>`)}
      ${this.group("g7", "셀", html`<div class="bigs">
        ${this.big(I.insert(), "삽입")}${this.big(I.del(), "삭제")}${this.big(I.format(), "서식")}</div>`)}
      ${this.group("g8", "편집", html`<div class="three">
          <button>${I.sum()}자동 합계 <span class="far">${chev()}</span></button>
          <button>${I.fillDown()}채우기${chev()}</button>
          <button>${I.erase()}지우기${chev()}</button>
        </div>
        <div class="bigs">
          ${this.big(I.sortFilter(), "정렬 및", "필터")}${this.big(I.find(), "찾기 및", "선택")}</div>`)}
      <button class="fold" aria-label="리본 메뉴 축소">${chevBig()}</button>
    </div>`;
  }

  private table() {
    return html`<table>
      <colgroup><col style="width:19px">${COL_W.map((w) => html`<col style="width:${w}px">`)}</colgroup>
      <thead><tr><th class="corner"></th>${COLS.map((c) => html`<th scope="col" class=${classMap({ on: c === "A" })}>${c}</th>`)}</tr></thead>
      <tbody>${Array.from({ length: LAST_ROW }, (_, i) => i + 1).map((r) => html`
        <tr class=${r === 2 ? "r27" : r >= 10 && r % 6 === 4 ? "r12" : ""}>
          <th scope="row" class=${classMap({ on: r === 1 })}>${r}</th>
          ${COLS.map((c) => {
            if (r === 1 && c === "A") return html`<td class="sel"><div></div></td>`;
            const cell = SHEET.get(c + r);
            return cell ? html`<td class=${cell.cls}>${cell.body}</td>` : html`<td></td>`;
          })}
        </tr>`)}</tbody>
    </table>`;
  }

  render() {
    const tabs = ["파일", "홈", "삽입", "페이지 레이아웃", "수식", "데이터", "검토", "보기", "도움말"];
    return html`<div class="app">
      <header class="titlebar">
        <div class="row">${I.logo()}
          <label class="auto">자동 저장<span class="switch"><input type="checkbox"><span>끔</span></span></label>
          <button aria-label="저장">${I.save()}</button>
          <button class="doc">리포트 샘플${chevBig()}</button>
        </div>
        <label class="search">${I.search()}<input type="search" placeholder="검색(Alt+Q)" aria-label="검색"></label>
        <div class="win"><span class="account"></span>
          <button aria-label="그리기">${I.pen()}</button><button aria-label="최소화">${I.min()}</button>
          <button aria-label="이전 크기로">${I.restore()}</button><button aria-label="닫기">${I.close()}</button>
        </div>
      </header>
      <div class="tabs">
        <nav>${tabs.map((t) => html`<button class=${classMap({ on: t === this.tab })} @click=${() => (this.tab = t)}>${t}</button>`)}</nav>
        <button class="pill">${I.memo()}메모</button><button class="pill go">${I.share()}공유</button>
      </div>
      <div class="card">
        ${this.ribbon()}
        <div class="qat">
          <button>${I.merge()}병합하고 가운데 맞춤</button>
          <button>${I.brush()}서식 복사</button>
          <button>${I.split()}텍스트 나누기</button>
          <button class="wide">${I.pivot()}피벗 테이블 ${chev()}</button>
          <button>${I.asc()}텍스트 오름차순 정렬</button>
          <button>${I.desc()}텍스트 내림차순 정렬</button>
          <button>${I.chart()}모든 차트 종류</button>
          <button class="off">${I.fields()}필드 목록</button>
          <button aria-label="도구 모음 사용자 지정">${I.overflow()}</button>
        </div>
      </div>
      <div class="fbar">
        <div class="box name"><input aria-label="이름 상자" .value=${"A1"}><button aria-label="이름 목록">${chevBig()}</button></div>
        <span class="grip">${I.dots()}</span>
        <div class="box fx"><button aria-label="취소">${I.x()}</button><button aria-label="입력">${I.check()}</button><button aria-label="함수 삽입"><em>fx</em></button></div>
        <div class="box formula"><input aria-label="수식 입력줄"><button aria-label="수식 입력줄 확장">${chevBig()}</button></div>
      </div>
      <main class="main">
        <div class="view">${this.table()}</div>
        <div class="vscroll">${I.tri("M1 7h6.500L4.200 2z")}<span class="thumb"></span><span class="end">${I.tri("M1 1h6.500L4.200 6z")}</span></div>
      </main>
      <div class="sheets">
        <div class="arrows">${I.tri("M5.500 1v6L2 4z", "#aaa")}${I.tri("M2.500 1v6L6 4z", "#aaa")}</div>
        <button class="sheet">매체별</button><button class="raw">raw</button><span class="rule"></span>
        <button class="plus" aria-label="새 시트">${I.add()}</button>
        <div class="hscroll"><span class="grip">${I.dots()}</span>${I.tri("M7 1v6L1.500 4z")}<span class="thumb"></span><span class="end">${I.tri("M1.500 .5v7L7 4z")}</span></div>
      </div>
      <footer class="status">
        <span>준비</span><button class="acc">${I.access()}접근성: 조사 필요</button>
        <div class="views"><button class="on" aria-label="기본">${I.normal()}</button><button aria-label="페이지 레이아웃">${I.pageLayout()}</button><button aria-label="페이지 나누기">${I.pageBreak()}</button></div>
        <div class="zoom"><button aria-label="축소">−</button><input type="range" min="10" max="180" value="85" aria-label="확대/축소"><button aria-label="확대">+</button><output>85%</output></div>
      </footer>
    </div>`;
  }
}
